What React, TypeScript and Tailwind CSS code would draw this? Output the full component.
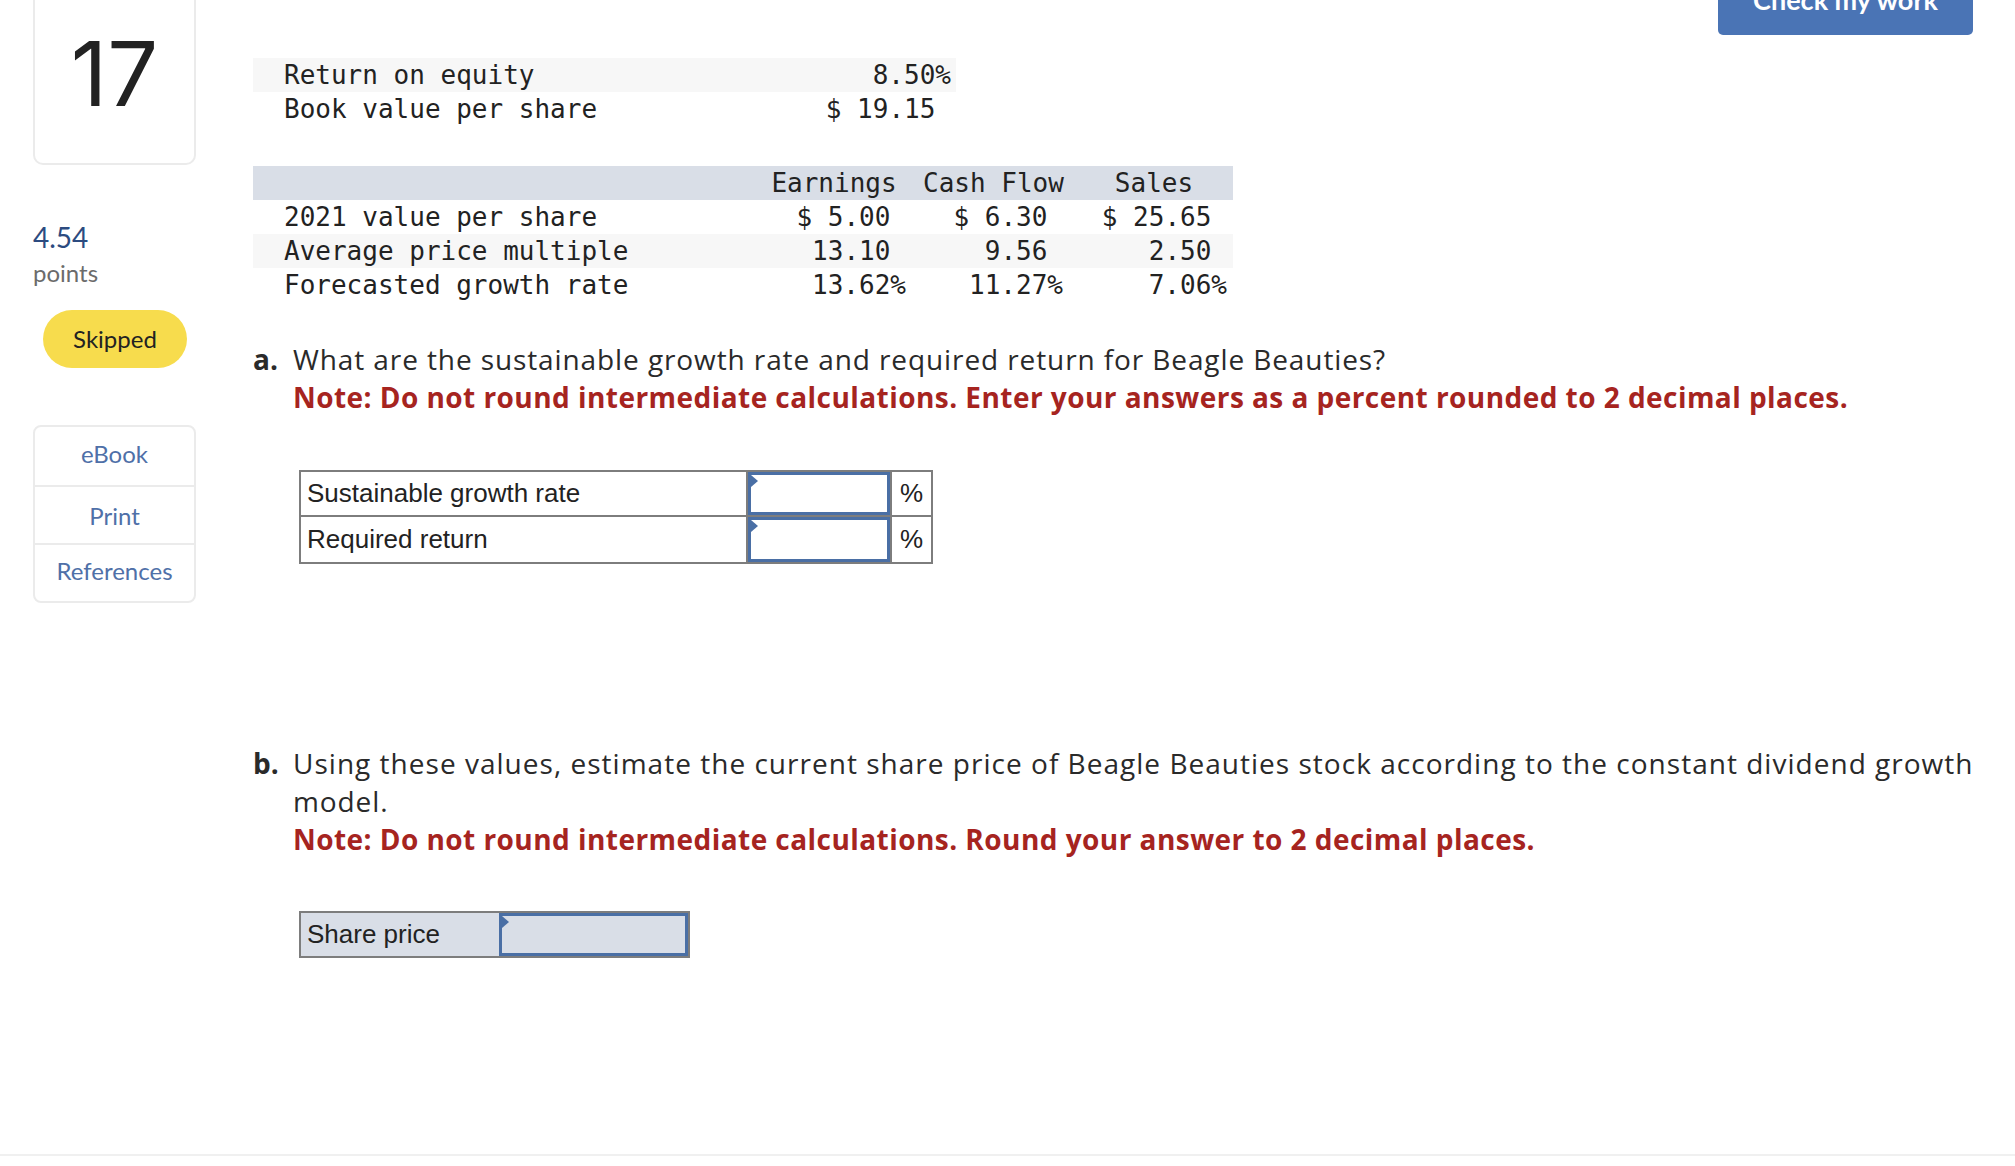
import React from "react";

const mono = { fontFamily: '"DejaVu Sans Mono", "Liberation Mono", monospace' };

function Flag() {
  return (
    <span className="absolute left-0 top-0 h-0 w-0 border-y-[6px] border-l-[7px] border-y-transparent border-l-[#4a6fa5]" />
  );
}

function Pct({ v }: { v: string }) {
  return (
    <>
      {v}
      <span className="-mr-[1ch]">%</span>
    </>
  );
}

function App() {
  const rows2 = [
    { label: "2021 value per share", e: "$ 5.00", c: "$ 6.30", s: "$ 25.65", bg: "bg-white", pct: false },
    { label: "Average price multiple", e: "13.10", c: "9.56", s: "2.50", bg: "bg-[#f7f7f7]", pct: false },
    { label: "Forecasted growth rate", e: "13.62", c: "11.27", s: "7.06", bg: "bg-white", pct: true },
  ];

  return (
    <div className="flex h-[1166px] flex-col overflow-hidden bg-white font-['Lato',sans-serif] text-[#222]">
      <div className="flex flex-1 pl-[33px] pr-[42px]">
        {/* sidebar */}
        <aside className="w-[163px] shrink-0">
          <div className="flex h-[165px] items-center justify-center rounded-b-[10px] border-2 border-t-0 border-[#ebebeb] pb-[16px]">
            <span className="font-['Inter',sans-serif] text-[90px] leading-none text-[#222]">17</span>
          </div>
          <div className="mt-[55px] text-[28px] leading-[34px] text-[#2c4b80]">4.54</div>
          <div className="mt-[4px] text-[24px] leading-[30px] text-[#6b6b6b]">points</div>
          <div className="mt-[22px] ml-[10px] flex h-[58px] w-[144px] items-center justify-center rounded-full bg-[#f7dc4d] text-[24px] text-[#222]">
            Skipped
          </div>
          <div className="mt-[57px] flex flex-col rounded-[8px] border-2 border-[#ebebeb] text-[24px] text-[#4f70a8]">
            <div className="flex h-[60px] items-center justify-center border-b-2 border-[#ebebeb] pb-[4px]">eBook</div>
            <div className="flex h-[58px] items-center justify-center border-b-2 border-[#ebebeb] pt-[2px]">Print</div>
            <div className="flex h-[56px] items-center justify-center pb-[4px]">References</div>
          </div>
        </aside>

        {/* main */}
        <main className="ml-[57px] min-w-0 flex-1">
          <div className="-mt-[25px] flex justify-end">
            <button className="flex h-[60px] w-[255px] items-end justify-center rounded-[5px] bg-[#4a74b5] pb-[22px] text-[27px] font-bold leading-none text-white">
              Check my work
            </button>
          </div>

          {/* table 1 */}
          <div className="mt-[23px] w-[703px] whitespace-nowrap text-[26px] leading-[34px]" style={mono}>
            <div className="flex bg-[#f7f7f7] pr-[5px]">
              <div className="flex-1 pl-[31px]">Return on equity</div>
              <div className="pr-[1ch] text-right">
                <Pct v="8.50" />
              </div>
            </div>
            <div className="flex pr-[5px]">
              <div className="flex-1 pl-[31px]">Book value per share</div>
              <div className="pr-[1ch] text-right">$ 19.15</div>
            </div>
          </div>

          {/* table 2 */}
          <div className="mt-[40px] w-[980px] whitespace-nowrap text-[26px] leading-[34px]" style={mono}>
            <div className="flex bg-[#d9dee7]">
              <div className="w-[509px]" />
              <div className="w-[144px] text-center">Earnings</div>
              <div className="w-[157px] pl-[17px] text-center">Cash Flow</div>
              <div className="w-[164px] pl-[18px] text-center">Sales</div>
            </div>
            {rows2.map((r) => (
              <div key={r.label} className={`flex ${r.bg}`}>
                <div className="w-[509px] pl-[31px]">{r.label}</div>
                <div className="w-[144px] pr-[1ch] text-right">{r.pct ? <Pct v={r.e} /> : r.e}</div>
                <div className="w-[157px] pr-[1ch] text-right">{r.pct ? <Pct v={r.c} /> : r.c}</div>
                <div className="w-[164px] pr-[1ch] text-right">{r.pct ? <Pct v={r.s} /> : r.s}</div>
              </div>
            ))}
          </div>

          {/* part a */}
          <div className="mt-[38px] flex font-['Open_Sans',sans-serif] text-[28px] leading-[38px] text-[#2a2a2a]">
            <div className="w-[40px] shrink-0 font-bold">a.</div>
            <div>
              <p className="whitespace-nowrap tracking-[0.9px]">
                What are the sustainable growth rate and required return for Beagle Beauties?
              </p>
              <p className="whitespace-nowrap font-bold tracking-[0.45px] text-[#a6241f]">
                Note: Do not round intermediate calculations. Enter your answers as a percent rounded to 2 decimal places.
              </p>
            </div>
          </div>

          <div className="mt-[54px] ml-[46px] w-[634px] border-2 border-[#7d7d7d] font-['Liberation_Sans',Arial,sans-serif] text-[26px] text-[#222]">
            {["Sustainable growth rate", "Required return"].map((label, i) => (
              <div key={label} className={`flex h-[45px] ${i === 0 ? "border-b-2 border-[#7d7d7d]" : ""}`}>
                <div className="flex w-[447px] items-center border-r-2 border-[#7d7d7d] pl-[6px]">{label}</div>
                <div className="relative w-[142px] border-[3px] border-[#4a6fa5] bg-white">
                  <Flag />
                </div>
                <div className="flex flex-1 items-center justify-center border-l-2 border-[#7d7d7d]">%</div>
              </div>
            ))}
          </div>

          {/* part b */}
          <div className="mt-[180px] flex font-['Open_Sans',sans-serif] text-[28px] leading-[38px] text-[#2a2a2a]">
            <div className="w-[40px] shrink-0 font-bold">b.</div>
            <div className="min-w-0">
              <p className="whitespace-nowrap tracking-[1.02px]">
                Using these values, estimate the current share price of Beagle Beauties stock according to the constant dividend growth
              </p>
              <p className="tracking-[0.9px]">model.</p>
              <p className="whitespace-nowrap font-bold tracking-[0.45px] text-[#a6241f]">
                Note: Do not round intermediate calculations. Round your answer to 2 decimal places.
              </p>
            </div>
          </div>

          <div className="mt-[53px] ml-[46px] flex h-[47px] w-[391px] border-2 border-[#7d7d7d] bg-[#d9dee7] font-['Liberation_Sans',Arial,sans-serif] text-[26px] text-[#222]">
            <div className="flex w-[198px] items-center pl-[6px]">Share price</div>
            <div className="relative flex-1 border-[3px] border-[#4a6fa5]">
              <Flag />
            </div>
          </div>
        </main>
      </div>
      <div className="h-[12px] border-t-2 border-[#f0f0f0]" />
    </div>
  );
}

export default App;
